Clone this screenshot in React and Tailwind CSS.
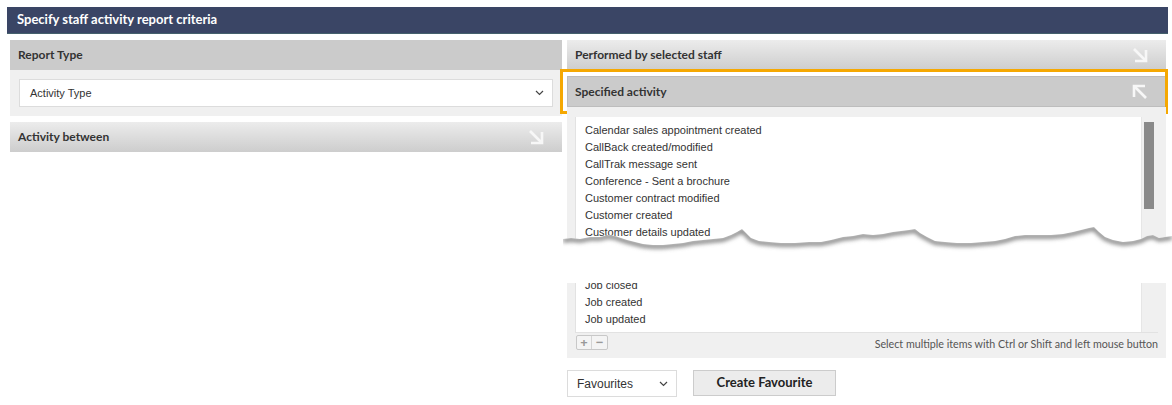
import React from 'react';

const lato = "font-['Lato','Open_Sans',sans-serif]";
const arial = "font-['Liberation_Sans',Arial,sans-serif]";

const ArrowOut = () => (
  <svg width="16" height="16" viewBox="0 0 16 16" fill="none" stroke="#f7f7f7" strokeWidth="2.6">
    <path d="M2 2 L13 13" />
    <path d="M3 14 H14 V3" />
  </svg>
);

const ArrowIn = () => (
  <svg width="16" height="16" viewBox="0 0 16 16" fill="none" stroke="#f7f7f7" strokeWidth="2.6">
    <path d="M3 3 L14 14" />
    <path d="M2 13 V2 H13" />
  </svg>
);

const Chevron = () => (
  <svg width="9" height="6" viewBox="0 0 9 6" fill="none" stroke="#444" strokeWidth="1.2">
    <path d="M1 1 L4.5 4.5 L8 1" />
  </svg>
);

const CollapsedHeader = ({ title, icon }) => (
  <div className="h-[30px] flex items-center justify-between pl-[8px] pr-[18px] bg-gradient-to-b from-[#ececec] to-[#cdcdcd]">
    <span className={`${lato} font-bold text-[12px] text-[#333]`}>{title}</span>
    {icon}
  </div>
);

const topItems = [
  'Calendar sales appointment created',
  'CallBack created/modified',
  'CallTrak message sent',
  'Conference - Sent a brochure',
  'Customer contract modified',
  'Customer created',
  'Customer details updated',
  'Customer note added',
];

const bottomItems = ['Job closed', 'Job created', 'Job updated'];

// torn paper edge
const tear = [
  [0, 15], [8, 14], [17, 15], [27, 13], [37, 13], [45, 11], [52, 12], [58, 14], [64, 16], [72, 18], [80, 20],
  [90, 21], [100, 21], [110, 20], [120, 19], [130, 17], [140, 16], [150, 15], [160, 14], [168, 11], [174, 8],
  [179, 5], [183, 9], [188, 14], [196, 17], [206, 18], [218, 19], [232, 19], [246, 18], [258, 18], [268, 16],
  [280, 13], [290, 12], [300, 10], [310, 11], [320, 10], [330, 8], [338, 7], [346, 6], [352, 5], [357, 9],
  [364, 13], [372, 17], [382, 18], [394, 19], [408, 19], [420, 18], [432, 17], [442, 15], [452, 12], [462, 11],
  [474, 11], [488, 11], [500, 10], [510, 8], [518, 6], [526, 4], [531, 3], [536, 8], [542, 13], [550, 16],
  [560, 18], [570, 17], [578, 15], [584, 12], [590, 11], [596, 14], [602, 13], [609, 12],
];

const TornEdge = () => {
  const line = tear.map(([x, y]) => `${x},${y}`).join(' ');
  return (
    <svg
      className="absolute left-[-4px] top-[117px] overflow-visible"
      width="609"
      height="40"
      viewBox="0 0 609 40"
    >
      <defs>
        <filter id="blur" x="-5%" y="-100%" width="110%" height="300%">
          <feGaussianBlur stdDeviation="2" />
        </filter>
        <clipPath id="below">
          <polygon points={`${line} 609,40 0,40`} />
        </clipPath>
      </defs>
      <polygon points={`${line} 609,40 0,40`} fill="#ffffff" />
      <g clipPath="url(#below)">
        <polyline
          points={line}
          fill="none"
          stroke="#7a7a7a"
          strokeWidth="4"
          filter="url(#blur)"
          transform="translate(0,1.5)"
        />
      </g>
    </svg>
  );
};

export default function App() {
  return (
    <div className="w-[1172px] h-[405px] bg-white overflow-hidden">
      <div
        className={`${lato} ml-[7px] mt-[7px] w-[1161px] h-[27px] bg-[#3a4565] border-b border-[#44606c] flex items-center pl-[10px] text-white font-bold text-[13px]`}
      >
        Specify staff activity report criteria
      </div>

      <div className="flex pl-[10px] mt-[6px]">
        {/* left column */}
        <div className="w-[552px] flex flex-col">
          <div className="h-[30px] bg-[#cbcbcb] flex items-center pl-[8px]">
            <span className={`${lato} font-bold text-[12px] text-[#333]`}>Report Type</span>
          </div>
          <div className="h-[46px] bg-[#f0f0f0] pl-[9px] pt-[9px]">
            <div className="w-[534px] h-[28px] bg-white border border-[#dcdcdc] flex items-center justify-between pl-[10px] pr-[8px]">
              <span className={`${arial} text-[11px] text-[#333]`}>Activity Type</span>
              <Chevron />
            </div>
          </div>
          <div className="mt-[6px]">
            <CollapsedHeader title="Activity between" icon={<ArrowOut />} />
          </div>
        </div>

        {/* right column */}
        <div className="w-[599px] ml-[5px] flex flex-col">
          <CollapsedHeader title="Performed by selected staff" icon={<ArrowOut />} />

          <div className="relative mt-[6px]">
            <div className="h-[31px] bg-[#cbcbcb] border border-[#bdbdbd] flex items-center justify-between pl-[7px] pr-[17px] pt-[1px]">
              <span className={`${lato} font-bold text-[12px] text-[#333]`}>Specified activity</span>
              <ArrowIn />
            </div>
            <div className="absolute -top-[7px] -left-[7px] -right-[2px] -bottom-[7px] border-[3px] border-[#f5a802] pointer-events-none" />
          </div>

          {/* list, top part */}
          <div className="relative h-[156px] bg-[#f0f0f0] px-[8px] pt-[10px]">
            <div className="h-[146px] bg-white border-l border-[#e2e2e2] flex overflow-hidden">
              <div className="flex-1 pl-[9px] pt-[5px]">
                {topItems.map((item) => (
                  <div key={item} className={`${arial} text-[11px] leading-[17px] text-[#333]`}>
                    {item}
                  </div>
                ))}
              </div>
              <div className="w-[17px] bg-[#f0f0f0] border-l border-[#e6e6e6] pt-[5px] pl-[2px]">
                <div className="w-[10px] h-[87px] bg-[#8a8a8a]" />
              </div>
            </div>
            <TornEdge />
          </div>

          {/* list, bottom part */}
          <div className="mt-[20px] bg-[#f0f0f0] px-[8px]">
            <div className="h-[50px] bg-white border-l border-b border-[#e2e2e2] flex overflow-hidden">
              <div className="flex-1 pl-[9px] -mt-[6px]">
                {bottomItems.map((item) => (
                  <div key={item} className={`${arial} text-[11px] leading-[17px] text-[#333]`}>
                    {item}
                  </div>
                ))}
              </div>
              <div className="w-[17px] bg-[#f0f0f0] border-l border-[#e6e6e6]" />
            </div>
            <div className="h-[25px] flex items-start justify-between pt-[2px]">
              <div className="flex h-[15px] border border-[#c8c8c8] rounded-[2px] bg-[#f4f4f4] ml-[1px]">
                <div className="w-[15px] flex items-center justify-center text-[#999] text-[13px] leading-none font-bold border-r border-[#d4d4d4]">
                  +
                </div>
                <div className="w-[15px] flex items-center justify-center text-[#999] text-[13px] leading-none font-bold">
                  −
                </div>
              </div>
              <span className={`${lato} text-[10.7px] text-[#555] mt-[1px]`}>
                Select multiple items with Ctrl or Shift and left mouse button
              </span>
            </div>
          </div>

          {/* favourites */}
          <div className="flex items-start mt-[12px]">
            <div className="w-[110px] h-[27px] bg-white border border-[#dcdcdc] flex items-center justify-between pl-[9px] pr-[8px]">
              <span className={`${arial} text-[12px] text-[#333]`}>Favourites</span>
              <Chevron />
            </div>
            <div
              className={`${lato} ml-[16px] w-[143px] h-[26px] bg-[#ececec] border border-[#cccccc] flex items-center justify-center font-bold text-[13px] text-[#222]`}
            >
              Create Favourite
            </div>
          </div>
        </div>
      </div>
    </div>
  );
}
